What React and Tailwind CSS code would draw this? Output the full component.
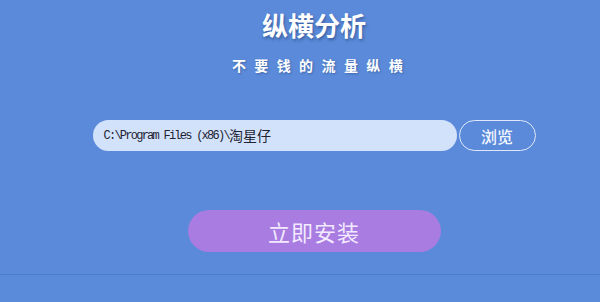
import React, { useState } from 'react'

const cjk = "font-['Noto_Sans_CJK_SC','Noto_Sans',sans-serif]"

const App = () => {
    const [path, setPath] = useState('C:\\Program Files (x86)\\')

    return (
        <div className={`w-[600px] h-[302px] bg-[#5a8ad9] flex flex-col overflow-hidden ${cjk}`}>

            <div className="flex-1 flex flex-col items-center pl-[28px]">

                <h1 className="mt-[9px] text-[26px] leading-[32px] font-bold text-white [text-shadow:1px_2px_3px_rgba(20,40,90,0.45)]">
                    纵横分析
                </h1>

                <p className="mt-[14px] ml-[15px] text-[14px] leading-[20px] font-bold tracking-[8.4px] text-white [text-shadow:1px_1px_2px_rgba(20,40,90,0.35)]">
                    不要钱的流量纵横
                </p>

                <div className="mt-[45px] flex items-center gap-[2px]">
                    <div className="w-[364px] h-[31px] rounded-full bg-[#d3e2fb] flex items-center pl-[11px]">
                        <span className="font-['Liberation_Mono',monospace] text-[12px] tracking-[-1.75px] text-[#1e2230]">{path}</span>
                        <span className="text-[14px] text-[#1e2230]">淘星仔</span>
                    </div>
                    <button
                        className="w-[77px] h-[31px] rounded-full border-[1.5px] border-[#dfe8fa] text-[16px] font-medium text-[#f2f6ff] flex items-center justify-center"
                        onClick={() => setPath(path)}
                    >
                        浏览
                    </button>
                </div>

                <button className="mt-[59px] w-[253px] h-[42px] rounded-full bg-[#a87ce0] text-[22px] text-[#f3eaff] flex items-center justify-center tracking-[1px]">
                    立即安装
                </button>

            </div>

            <div className="h-[28px] border-t border-[#4c7cc9] bg-[#5a8bda]"></div>
        </div>
    )
}

export default App
